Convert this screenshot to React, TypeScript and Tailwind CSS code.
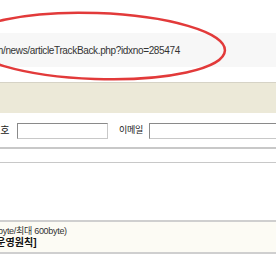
export default function App() {
  return (
    <div
      className="relative h-[260px] w-[276px] overflow-hidden bg-white text-[11px] text-[#222]"
      style={{ fontFamily: '"Liberation Sans", "Noto Sans CJK KR", sans-serif' }}
    >
      <div className="h-[33px]" />
      {/* address bar */}
      <div className="flex h-[34px] items-center overflow-hidden bg-[#f7f7f7]">
        <span className="-ml-[5px] whitespace-nowrap text-[10px] tracking-[-0.35px] text-[#333]">
          m/news/articleTrackBack.php?idxno=285474
        </span>
      </div>
      <div className="h-[15px]" />
      <div className="h-px bg-[#d6d3c6]" />
      <div className="h-[30px] bg-[#ece9d8]" />
      <div className="h-px bg-white" />
      {/* form row */}
      <div className="flex h-[33px] items-center whitespace-nowrap">
        <span className="-ml-[9px] w-[26px] text-[10px]">번호</span>
        <div className="h-[16px] w-[91px] border border-[#8a8a8a] border-r-[#c8c8c8] border-b-[#c8c8c8] bg-white" />
        <span className="ml-[11px] w-[30px] text-[9px] tracking-[-0.3px]">이메일</span>
        <div className="h-[16px] flex-1 border border-[#8a8a8a] border-r-0 border-b-[#c8c8c8] bg-white" />
      </div>
      <div className="h-[2px] bg-[#c8c8c8]" />
      <div className="h-[13px]" />
      <div className="h-px bg-[#c8c8c8]" />
      <div className="h-[57px]" />
      {/* notice box */}
      <div className="border-y-2 border-[#cfcfcf] bg-[#fcfbf4] py-[3px] leading-[12px]">
        <div className="-ml-[2px] whitespace-nowrap text-[9px] tracking-[-0.3px] text-[#333]">
          {' '}byte/최대 600byte)
        </div>
        <div className="-ml-[7px] whitespace-nowrap text-[10px] font-bold text-[#111]">
          [운영원칙]
        </div>
      </div>
      {/* red annotation */}
      <svg
        className="pointer-events-none absolute left-0 top-0"
        width="276"
        height="260"
        viewBox="0 0 276 260"
      >
        <ellipse
          cx="96"
          cy="46"
          rx="129"
          ry="33"
          transform="rotate(2 96 46)"
          fill="none"
          stroke="#e23a3a"
          strokeWidth="2.5"
        />
      </svg>
    </div>
  );
}
